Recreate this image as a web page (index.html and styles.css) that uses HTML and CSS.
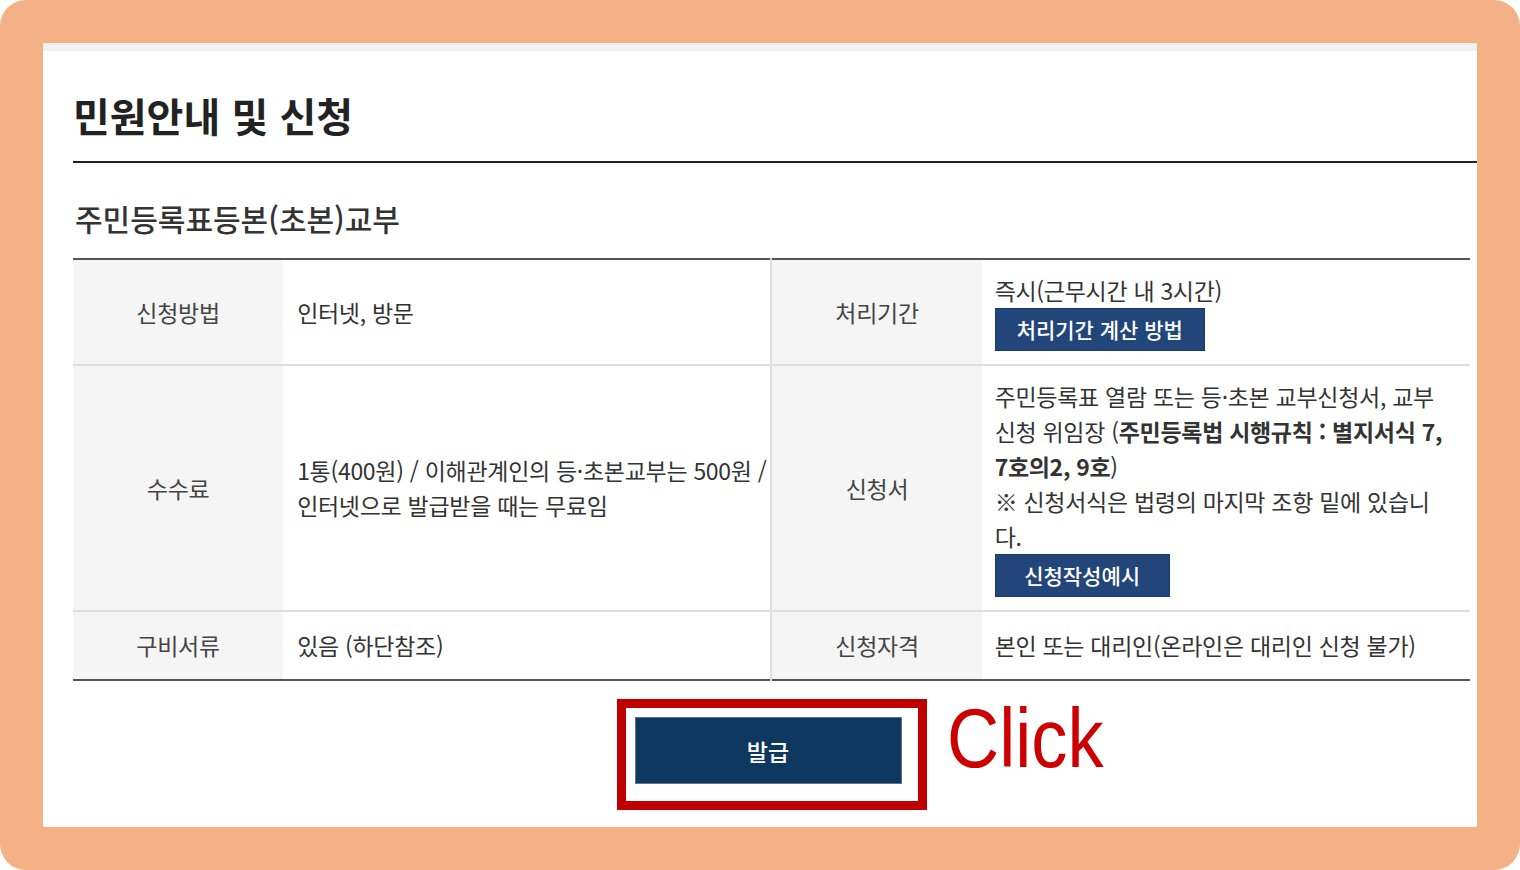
FILE: index.html
```html
<!DOCTYPE html>
<html lang="ko">
<head>
    <meta charset="UTF-8">
    <title>민원안내 및 신청</title>
    <link rel="stylesheet" href="styles.css">
</head>
<body>
    <div class="frame">
        <div class="page">
            <div class="content">
                <h1 class="page-title">민원안내 및 신청</h1>
                <h2 class="service-title">주민등록표등본(초본)교부</h2>

                <table class="info-table">
                    <colgroup>
                        <col class="col-head">
                        <col class="col-value">
                        <col class="col-head">
                        <col class="col-value">
                    </colgroup>
                    <tr>
                        <th>신청방법</th>
                        <td>인터넷, 방문</td>
                        <th class="split">처리기간</th>
                        <td>
                            즉시(근무시간 내 3시간)
                            <a class="btn-sm" href="#">처리기간 계산 방법</a>
                        </td>
                    </tr>
                    <tr>
                        <th>수수료</th>
                        <td class="lines">1통(400원) / 이해관계인의 등·초본교부는 500원 /<br>인터넷으로 발급받을 때는 무료임</td>
                        <th class="split">신청서</th>
                        <td class="lines">
                            주민등록표 열람 또는 등·초본 교부신청서, 교부<br>
                            신청 위임장 (<b>주민등록법 시행규칙 : 별지서식 7,<br>7호의2, 9호</b>)<br>
                            ※ 신청서식은 법령의 마지막 조항 밑에 있습니<br>다.
                            <a class="btn-sm btn-wide" href="#">신청작성예시</a>
                        </td>
                    </tr>
                    <tr class="last-row">
                        <th>구비서류</th>
                        <td>있음 (하단참조)</td>
                        <th class="split">신청자격</th>
                        <td>본인 또는 대리인(온라인은 대리인 신청 불가)</td>
                    </tr>
                </table>

                <div class="issue-row">
                    <div class="highlight">
                        <button type="button" class="btn-issue">발급</button>
                        <span class="click-label">Click</span>
                    </div>
                </div>
            </div>
        </div>
    </div>
</body>
</html>
```

FILE: styles.css
```css
body { margin: 0; background: #fff; font-family: "Noto Sans CJK KR", "Noto Sans", sans-serif; }

.frame {
    width: 1520px;
    height: 870px;
    padding: 43px;
    box-sizing: border-box;
    background: #f3b185;
    border-radius: 26px;
}
.page {
    height: 784px;
    box-sizing: border-box;
    background: #fff;
    border-top: 8px solid #f2f1f3;
}
.content { padding: 40px 0 0 30px; }

.page-title {
    margin: 0;
    padding-bottom: 22px;
    border-bottom: 2px solid #222;
    font-size: 40px;
    line-height: 48px;
    font-weight: 700;
    color: #222;
}
.service-title {
    margin: 37px 0 22px 2px;
    font-size: 30px;
    line-height: 36px;
    font-weight: 500;
    color: #333;
}

.info-table {
    width: 1397px;
    border-collapse: collapse;
    table-layout: fixed;
    border-top: 2px solid #555;
    border-bottom: 2px solid #555;
    font-size: 23px;
    line-height: 35px;
    letter-spacing: -0.3px;
    color: #333;
}
.col-head { width: 210px; }
.col-value { width: 488px; }
.info-table tr + tr { border-top: 2px solid #dedede; }
.info-table th {
    background: #f5f5f5;
    font-weight: 400;
    color: #444;
    text-align: center;
    vertical-align: middle;
    padding: 13px 0;
}
.info-table th.split { border-left: 2px solid #dedede; }
.info-table td {
    vertical-align: middle;
    padding: 13px 12px 13px 13px;
}
.info-table td:nth-child(2) { padding-left: 14px; }
.info-table td.lines { white-space: nowrap; }
.info-table td b { font-weight: 700; color: #333; }
.last-row th, .last-row td { padding-top: 16px; padding-bottom: 16px; }

.btn-sm {
    display: block;
    width: max-content;
    height: 43px;
    padding: 0 21px;
    box-sizing: border-box;
    background: #23467a;
    border: 1px solid #1b3a66;
    color: #fff;
    font-size: 21px;
    line-height: 41px;
    font-weight: 500;
    letter-spacing: 0;
    text-decoration: none;
}
.btn-wide { min-width: 175px; text-align: center; }

.issue-row {
    width: 1397px;
    margin-top: 18px;
    display: flex;
    justify-content: center;
}
.highlight {
    position: relative;
    border: 9px solid #c00000;
    padding: 9px 16px 17px 9px;
}
.btn-issue {
    display: block;
    width: 267px;
    height: 67px;
    background: #0f3861;
    border: 1px solid #5c7390;
    color: #fff;
    font-family: "Noto Sans CJK KR", sans-serif;
    font-size: 23px;
    font-weight: 500;
    cursor: pointer;
}
.click-label {
    position: absolute;
    left: calc(100% + 29px);
    top: -12px;
    font-family: "Liberation Sans", Arial, sans-serif;
    font-size: 84px;
    line-height: 84px;
    color: #cc0000;
    transform: scaleX(0.86);
    transform-origin: left top;
}
```
